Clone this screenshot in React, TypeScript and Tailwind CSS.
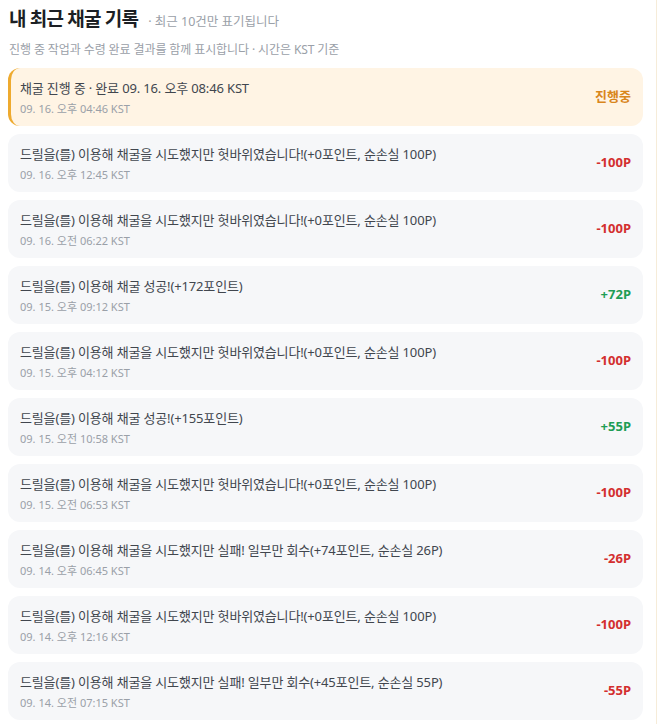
import React from "react";

type Row = { text: string; time: string; value: string; tone: "pending" | "loss" | "gain" };

const rows: Row[] = [
  { text: "드릴을(를) 이용해 채굴을 시도했지만 헛바위였습니다!(+0포인트, 순손실 100P)", time: "09. 16. 오후 12:45 KST", value: "-100P", tone: "loss" },
  { text: "드릴을(를) 이용해 채굴을 시도했지만 헛바위였습니다!(+0포인트, 순손실 100P)", time: "09. 16. 오전 06:22 KST", value: "-100P", tone: "loss" },
  { text: "드릴을(를) 이용해 채굴 성공!(+172포인트)", time: "09. 15. 오후 09:12 KST", value: "+72P", tone: "gain" },
  { text: "드릴을(를) 이용해 채굴을 시도했지만 헛바위였습니다!(+0포인트, 순손실 100P)", time: "09. 15. 오후 04:12 KST", value: "-100P", tone: "loss" },
  { text: "드릴을(를) 이용해 채굴 성공!(+155포인트)", time: "09. 15. 오전 10:58 KST", value: "+55P", tone: "gain" },
  { text: "드릴을(를) 이용해 채굴을 시도했지만 헛바위였습니다!(+0포인트, 순손실 100P)", time: "09. 15. 오전 06:53 KST", value: "-100P", tone: "loss" },
  { text: "드릴을(를) 이용해 채굴을 시도했지만 실패! 일부만 회수(+74포인트, 순손실 26P)", time: "09. 14. 오후 06:45 KST", value: "-26P", tone: "loss" },
  { text: "드릴을(를) 이용해 채굴을 시도했지만 헛바위였습니다!(+0포인트, 순손실 100P)", time: "09. 14. 오후 12:16 KST", value: "-100P", tone: "loss" },
  { text: "드릴을(를) 이용해 채굴을 시도했지만 실패! 일부만 회수(+45포인트, 순손실 55P)", time: "09. 14. 오전 07:15 KST", value: "-55P", tone: "loss" },
];

function HistoryRow({ row }: { row: Row }) {
  const valueClass =
    row.tone === "gain" ? "text-[#1f9d55]" : row.tone === "loss" ? "text-[#d32f2f]" : "text-[#d9861c]";
  return (
    <li className="flex h-[58px] items-center justify-between rounded-xl bg-[#f6f7f9] pl-3 pr-3">
      <div className="flex flex-col gap-[3px]">
        <span className="text-[13px] leading-[19px] tracking-[-0.15px] text-[#41464e]">{row.text}</span>
        <span className="text-[11px] leading-[15px] text-[#9aa0a8]">{row.time}</span>
      </div>
      <span className={`text-[13px] font-bold ${valueClass}`}>{row.value}</span>
    </li>
  );
}

export default function App() {
  return (
    <div
      className="flex min-h-screen bg-white"
      style={{ fontFamily: '"Noto Sans", "Noto Sans CJK KR", sans-serif' }}
    >
      {/* main column, faint warm divider on the right */}
      <div className="w-[657px] border-r border-[#f6ecd9] pl-2 pr-[13px] pt-[3px]">
        <div className="flex items-baseline gap-[10px] pl-[1px]">
          <h2 className="text-[19px] font-bold leading-[32px] tracking-[-0.8px] text-[#1c1f24]">내 최근 채굴 기록</h2>
          <span className="text-[12.5px] text-[#9aa0a8]">· 최근 10건만 표기됩니다</span>
        </div>
        <p className="mt-[7px] pl-[1px] text-[12px] leading-[16px] tracking-[-0.1px] text-[#9aa0a8]">
          진행 중 작업과 수령 완료 결과를 함께 표시합니다 · 시간은 KST 기준
        </p>
        <ul className="mt-[10px] flex flex-col gap-2">
          <li className="flex h-[58px] items-center justify-between rounded-xl border-l-[3px] border-[#eeaa2f] bg-[#fff4e4] pl-[9px] pr-3">
            <div className="flex flex-col gap-[3px]">
              <span className="text-[13px] leading-[19px] tracking-[-0.15px] text-[#41464e]">채굴 진행 중 · 완료 09. 16. 오후 08:46 KST</span>
              <span className="text-[11px] leading-[15px] text-[#9aa0a8]">09. 16. 오후 04:46 KST</span>
            </div>
            <span className="text-[13px] font-bold text-[#d9861c]">진행중</span>
          </li>
          {rows.map((r, i) => (
            <HistoryRow key={i} row={r} />
          ))}
        </ul>
      </div>
    </div>
  );
}
